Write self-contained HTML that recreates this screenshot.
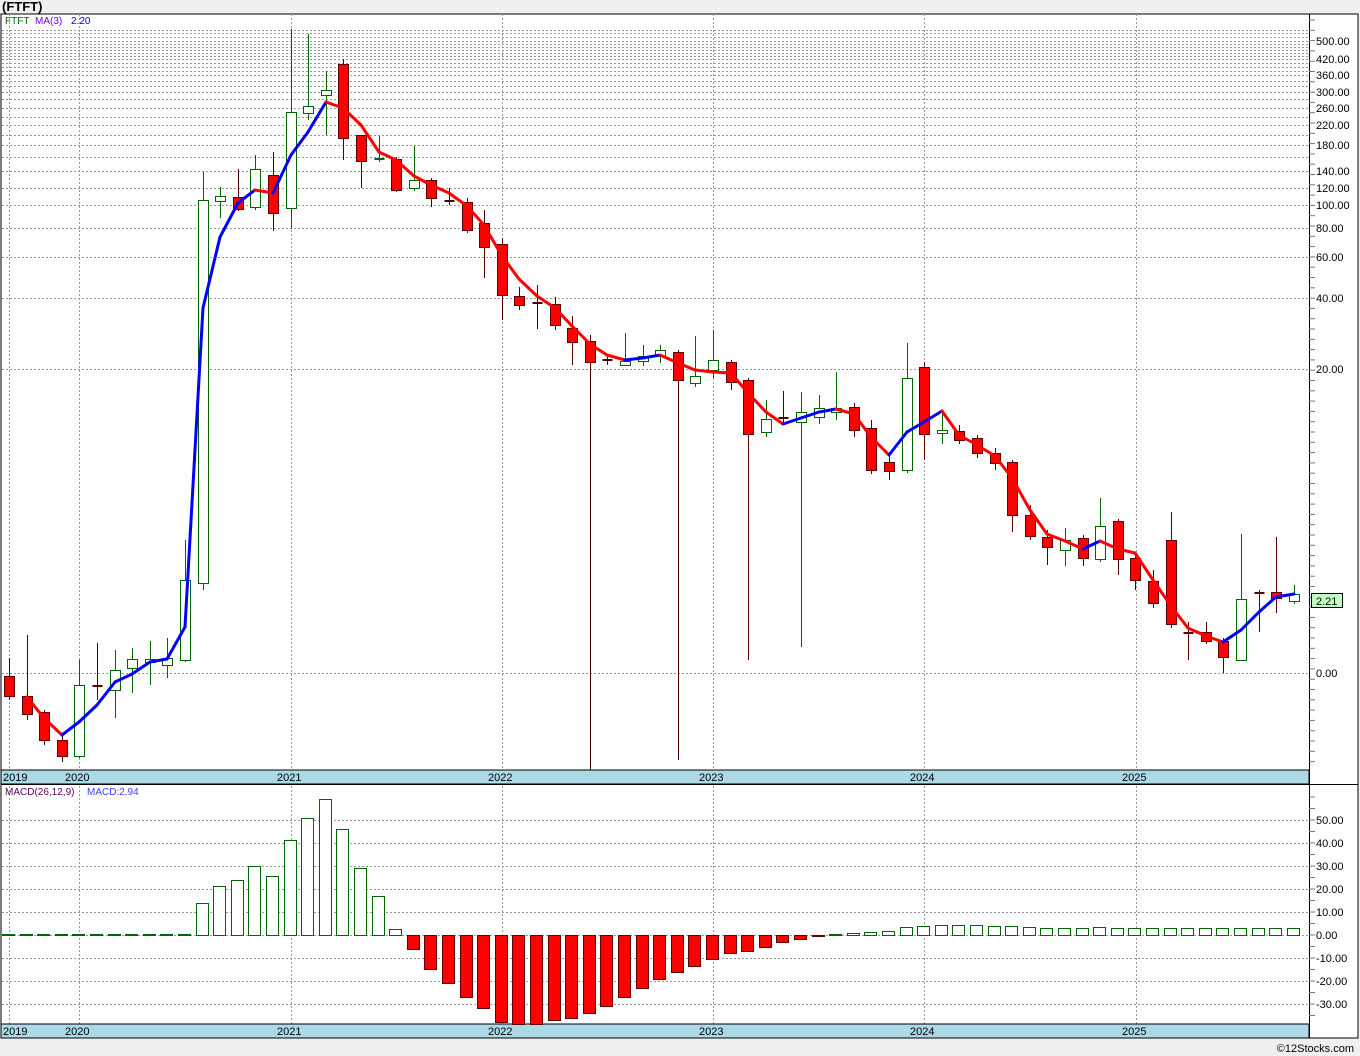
<!DOCTYPE html>
<html><head><meta charset="utf-8"><style>
html,body{margin:0;padding:0;background:#f0f0f0;}
svg{display:block;font-family:"Liberation Sans","DejaVu Sans",sans-serif;}
</style></head><body>
<svg id="c" width="1360" height="1056" xmlns="http://www.w3.org/2000/svg">
<rect x="0" y="0" width="1360" height="1056" fill="#f0f0f0"/>
<text x="2" y="11" font-size="13" font-weight="bold" fill="#000">(FTFT)</text>
<rect x="1" y="14" width="1357" height="1024" fill="#fff" stroke="#000"/>
<g id="g"></g>
<text x="1354" y="1052" font-size="11" text-anchor="end" fill="#000">©12Stocks.com</text>
</svg>
<script>
var NS="http://www.w3.org/2000/svg",G=document.getElementById('g');
function el(t,a,txt){var e=document.createElementNS(NS,t);for(var k in a)e.setAttribute(k,a[k]);if(txt!=null)e.textContent=txt;G.appendChild(e);return e;}
var dot={stroke:"#999","stroke-dasharray":"2,2","stroke-width":1};
// horizontal grid main
var minor=[30,33,37,41,44,47,50,53,56,59,63,67,71,75,81,86,92,99,108,117,125,135,145,157,171,188,205];
minor.forEach(function(y){el('line',Object.assign({x1:2,x2:1309,y1:y+.5,y2:y+.5},dot));});
[228,257,298,369,673].forEach(function(y){el('line',Object.assign({x1:2,x2:1309,y1:y+.5,y2:y+.5},dot));});
[820,843,866,889,912,935,958,981,1004].forEach(function(y){el('line',Object.assign({x1:2,x2:1309,y1:y+.5,y2:y+.5},dot));});
// vertical grid
[9,79,291,502,713,924,1136].forEach(function(x){el('line',Object.assign({x1:x+.5,x2:x+.5,y1:14,y2:1024},dot));});
// axis bars
[[770,784],[1024,1038]].forEach(function(b){el('rect',{x:1,y:b[0],width:1308,height:b[1]-b[0],fill:"#add8e6",stroke:"#000"});
 [["2019",3],["2020",65],["2021",277],["2022",488],["2023",699],["2024",910],["2025",1122]].forEach(function(l){el('text',{x:l[1],y:b[0]+11,"font-size":11,fill:"#000"},l[0]);});});
el('line',{x1:1,x2:1358,y1:784.5,y2:784.5,stroke:"#000"});
el('line',{x1:1309.5,x2:1309.5,y1:14,y2:1038,stroke:"#000"});
// ticks right
for(var y=20;y<770;y+=10.3)el('line',{x1:1309,x2:1315,y1:y,y2:y,stroke:"#777"});
for(var y=797;y<1024;y+=11.5)el('line',{x1:1309,x2:1315,y1:y,y2:y,stroke:"#777"});
[["500.00",41],["420.00",59],["360.00",75],["300.00",92],["260.00",108],["220.00",125],["180.00",145],["140.00",171],["120.00",188],["100.00",205],["80.00",228],["60.00",257],["40.00",298],["20.00",369],["0.00",673]].forEach(function(l){el('text',{x:1316,y:l[1]+4,"font-size":11,fill:"#000"},l[0]);});
[["50.00",820],["40.00",843],["30.00",866],["20.00",889],["10.00",912],["0.00",935],["-10.00",958],["-20.00",981],["-30.00",1004]].forEach(function(l){el('text',{x:1316,y:l[1]+4,"font-size":11,fill:"#000"},l[0]);});
// candles: [bt,bb,wt,wb,type] type r red, g green, d doji
var C=[[676,696,658,700,'r'],[696,714,635,720,'r'],[712,740,710,745,'r'],[740,756,735,762,'r'],[685,756,660,758,'g'],[685,687,643,700,'d'],[670,690,650,718,'g'],[659,668,648,693,'g'],[659,662,641,685,'g'],[658,665,638,678,'g'],[580,660,540,662,'g'],[200,583,172,590,'g'],[196,201,187,218,'g'],[197,209,169,211,'r'],[169,207,155,210,'g'],[175,213,152,231,'r'],[112,208,29,229,'g'],[106,113,34,120,'g'],[90,95,71,135,'g'],[64,138,59,160,'r'],[135,161,136,188,'r'],[158,160,136,162,'dg'],[159,190,157,192,'r'],[180,188,146,191,'g'],[180,198,178,207,'r'],[200,201,188,205,'d'],[202,230,198,233,'r'],[223,247,210,278,'r'],[244,295,238,320,'r'],[296,305,287,310,'r'],[302,304,285,329,'d'],[304,325,297,330,'r'],[328,342,316,365,'r'],[341,362,335,770,'r'],[359,361,355,365,'d'],[361,365,333,366,'g'],[356,361,345,366,'g'],[350,356,345,363,'g'],[352,380,350,760,'r'],[376,383,336,387,'g'],[360,370,330,378,'g'],[362,382,360,390,'r'],[380,434,378,660,'r'],[419,432,400,437,'g'],[417,419,391,424,'d'],[412,422,392,647,'g'],[408,417,395,424,'g'],[408,412,372,420,'g'],[407,430,403,437,'r'],[428,470,420,474,'r'],[462,471,452,480,'r'],[378,470,343,473,'g'],[367,434,362,460,'r'],[430,433,414,444,'g'],[431,440,425,444,'r'],[438,453,435,458,'r'],[453,463,448,470,'r'],[462,515,460,532,'r'],[515,536,505,540,'r'],[537,547,530,565,'r'],[540,550,528,566,'g'],[538,558,535,566,'r'],[526,559,498,562,'g'],[521,559,519,575,'r'],[558,580,555,590,'r'],[581,603,570,608,'r'],[540,624,512,628,'r'],[632,633,622,660,'d'],[632,641,622,644,'r'],[641,657,638,673,'r'],[599,660,534,661,'g'],[592,593,590,632,'d'],[592,598,537,613,'r'],[594,601,585,604,'g']];
function X(i){return Math.round(9+17.6*i);}
C.forEach(function(c,i){var x=X(i)+.5,t=c[4];
 var wc=(t=='g'||t=='dg')?"#006400":"#500000";
 el('line',{x1:x,x2:x,y1:c[2],y2:c[3],stroke:wc});
 if(t=='d'||t=='dg'){el('line',{x1:x-5,x2:x+5,y1:c[0]+1,y2:c[0]+1,stroke:wc,"stroke-width":2});}
 else el('rect',{x:x-5,y:c[0]+.5,width:10,height:Math.max(2,c[1]-c[0]),fill:t=='r'?"#ff0000":"#fff",stroke:t=='r'?"#600000":"#006400"});
});
// MA
var M=[697,718,735,722,705,682,674,662,659,627,308,237,203,190,193,155,132,102,108,125,152,160,176,185,193,206,225,256,279,296,308,326,344,355,360,358,355,363,370,372,373,393,412,424,418,412,409,414,437,455,432,422,411,435,445,456,478,510,534,541,549,541,549,553,580,606,628,636,642,630,612,597,594];
for(var i=0;i<M.length-1;i++){var x1=X(i+1),x2=X(i+2);
 el('line',{x1:x1,x2:x2,y1:M[i],y2:M[i+1],stroke:M[i+1]<M[i]?"#0000ff":"#ff0000","stroke-width":3,"stroke-linecap":"round"});}
el('text',{x:5,y:24,"font-size":10,fill:"#006400"},"FTFT");
el('text',{x:35,y:24,"font-size":10,fill:"#6a00ff"},"MA(3)");
el('text',{x:71,y:24,"font-size":10,fill:"#0000ff"},"2.20");
el('rect',{x:1311.5,y:593.5,width:31,height:14,fill:"#c0ffc0",stroke:"#000"});
el('text',{x:1316,y:605,"font-size":11,fill:"#000"},"2.21");
// MACD
el('text',{x:5,y:795,"font-size":10,fill:"#600060"},"MACD(26,12,9)");
el('text',{x:87,y:795,"font-size":10,fill:"#4040ff"},"MACD:2.94");
var V=[0,0,0,0,0,0,0,0,0,0,0,903,886,880,866,876,840,818,799,829,868,896,929,949,969,983,997,1008,1022,1024,1024,1020,1018,1013,1006,997,988,979,972,966,959,953,951,947,942,939,936,934,933,932,931,927,926,925,925,925,926,926,927,928,928,928,927,928,928,928,928,928,928,928,928,928,928,928];
V.forEach(function(v,i){var x=X(i);
 if(v==0){el('line',{x1:x-7,x2:x+6,y1:935,y2:935,stroke:"#006400","stroke-width":2});return;}
 if(v<935)el('rect',{x:x-6.5,y:v+.5,width:12,height:935-v,fill:"#fff",stroke:"#006400"});
 else el('rect',{x:x-6.5,y:935.5,width:12,height:v-935,fill:"#ff0000",stroke:"#600000"});
});
</script>
</body></html>
